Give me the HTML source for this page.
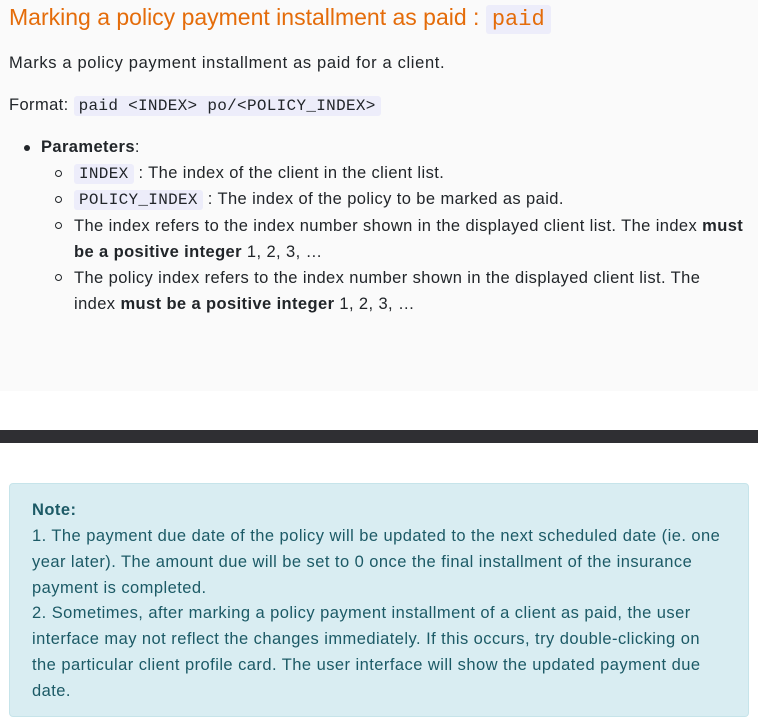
<!DOCTYPE html>
<html><head><meta charset="utf-8"><style>
*{margin:0;padding:0;box-sizing:border-box}
html,body{width:758px;height:723px;overflow:hidden;background:#fff;font-family:"Liberation Sans",sans-serif;color:#212529}
.top{position:absolute;left:0;top:0;width:758px;height:391px;background:#fafafa}
.l{position:absolute;white-space:nowrap;font-size:16.5px;line-height:20px;letter-spacing:0.4px}
code{font-family:"Liberation Mono",monospace;background:#ededfa;border-radius:3px;padding:1px 5px;color:#212529;font-size:16px;letter-spacing:0.3px}
h1{position:absolute;left:9px;top:2px;font-weight:normal;font-size:23px;color:#e46c0a;white-space:nowrap;line-height:30px}
h1 code{color:#e46c0a;font-size:22px;padding:2px 6px;letter-spacing:0}
.bar{position:absolute;left:0;top:430px;width:758px;height:13px;background:#2f2f33}
.note{position:absolute;left:9px;top:483px;width:740px;height:234px;background:#d9edf2;border:1px solid #c6e4ea;border-radius:4px;color:#1c5a66}
.note .l{left:22px;font-size:16.5px;letter-spacing:0.45px}
.dot{position:absolute;width:6px;height:6px;border-radius:50%;background:#212529}
.circ{position:absolute;width:7px;height:7px;border-radius:50%;border:1.3px solid #212529}
</style></head><body>
<div class="top"></div>
<h1>Marking a policy payment installment as paid : <code>paid</code></h1>
<div class="l" style="left:9px;top:53px;letter-spacing:0.65px">Marks a policy payment installment as paid for a client.</div>
<div class="l" style="left:9px;top:95px">Format: <code>paid &lt;INDEX&gt; po/&lt;POLICY_INDEX&gt;</code></div>
<div class="dot" style="left:24px;top:145px"></div>
<div class="l" style="left:41px;top:137px"><b>Parameters</b>:</div>
<div class="circ" style="left:55px;top:170px"></div>
<div class="l" style="left:74px;top:163px"><code>INDEX</code> : The index of the client in the client list.</div>
<div class="circ" style="left:55px;top:196px"></div>
<div class="l" style="left:74px;top:189px"><code>POLICY_INDEX</code> : The index of the policy to be marked as paid.</div>
<div class="circ" style="left:55px;top:222px"></div>
<div class="l" style="left:74px;top:216px">The index refers to the index number shown in the displayed client list. The index <b>must</b></div>
<div class="l" style="left:74px;top:242px"><b>be a positive integer</b> 1, 2, 3, …</div>
<div class="circ" style="left:55px;top:274px"></div>
<div class="l" style="left:74px;top:268px">The policy index refers to the index number shown in the displayed client list. The</div>
<div class="l" style="left:74px;top:294px">index <b>must be a positive integer</b> 1, 2, 3, …</div>
<div class="bar"></div>
<div class="note">
<div class="l" style="top:16px"><b>Note:</b></div>
<div class="l" style="top:42px">1. The payment due date of the policy will be updated to the next scheduled date (ie. one</div>
<div class="l" style="top:68px">year later). The amount due will be set to 0 once the final installment of the insurance</div>
<div class="l" style="top:94px">payment is completed.</div>
<div class="l" style="top:119px">2. Sometimes, after marking a policy payment installment of a client as paid, the user</div>
<div class="l" style="top:145px">interface may not reflect the changes immediately. If this occurs, try double-clicking on</div>
<div class="l" style="top:171px">the particular client profile card. The user interface will show the updated payment due</div>
<div class="l" style="top:197px">date.</div>
</div>
</body></html>
